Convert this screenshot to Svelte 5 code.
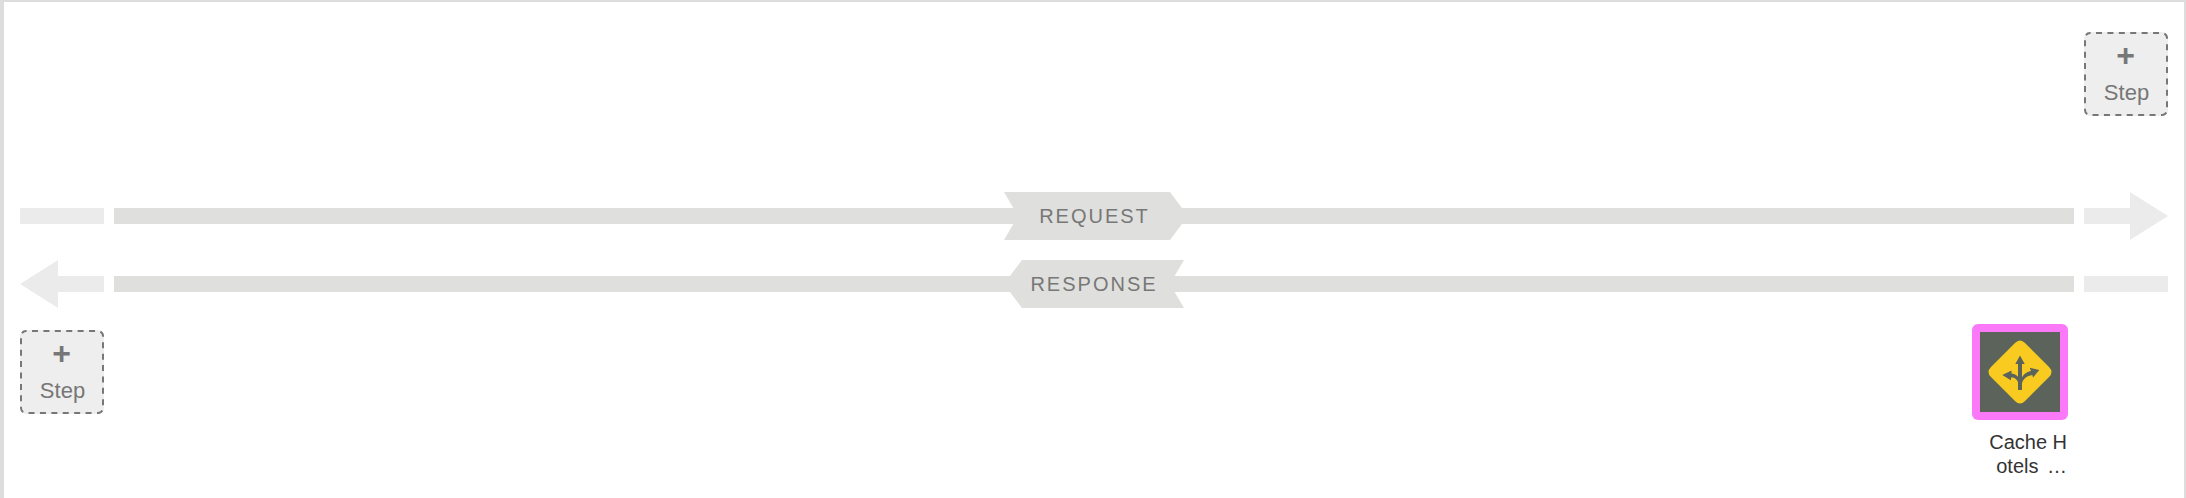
<script>
  const lanes = [
    { name: 'REQUEST', dir: 'right' },
    { name: 'RESPONSE', dir: 'left' }
  ];
</script>

{#snippet addStep()}
  <button class="step">
    <svg class="outline" viewBox="0 0 84 84" aria-hidden="true">
      <rect x="1" y="1" width="82" height="82" rx="5" />
    </svg>
    <span class="plus">+</span><span class="caption">Step</span>
  </button>
{/snippet}

<main class="flow">
  <div class="top">{@render addStep()}</div>

  {#each lanes as lane}
    <div class="lane {lane.dir}">
      <svg class="end" viewBox="0 0 84 48" aria-hidden="true">
        {#if lane.dir === 'left'}
          <path d="M0 24 38 0V16H84V32H38V48Z" />
        {:else}
          <path d="M0 16H84V32H0Z" />
        {/if}
      </svg>
      <div class="track"><span class="label">{lane.name}</span></div>
      <svg class="end" viewBox="0 0 84 48" aria-hidden="true">
        {#if lane.dir === 'right'}
          <path d="M0 16H46V0L84 24 46 48V32H0Z" />
        {:else}
          <path d="M0 16H84V32H0Z" />
        {/if}
      </svg>
    </div>
  {/each}

  <div class="bottom">
    {@render addStep()}
    <div class="policy">
      <div class="icon">
        <svg viewBox="0 0 80 80" aria-hidden="true">
          <path fill="#f9cb21" d="M35 11Q40 6 45 11L69 35Q74 40 69 45L45 69Q40 74 35 69L11 45Q6 40 11 35Z" />
          <g fill="#5b635a">
            <path d="M38 58V32H35.3L40 23.5 44.7 32H42V58Z" />
            <path d="M59.3 38 49.8 35.8 51 39C46 40 43 43 41.5 46.5L42 51.5C43 46.8 47 43.9 52.3 43L53 45.4Z" />
            <path d="M22.3 43 31.5 38.6V41.4C35 41.8 37.5 43.5 39 46L38.3 51C37.5 47.5 35 45.5 31.3 45.2L30.8 48.3Z" />
          </g>
        </svg>
      </div>
      <div class="name"><span>Cache H</span><span class="tail">otels&nbsp; …</span></div>
    </div>
  </div>
</main>

<style>
  :global(body) {
    margin: 0;
    background: #fff;
  }
  .flow {
    box-sizing: border-box;
    height: 498px;
    padding: 30px 16px 0;
    border: solid #ddd;
    border-width: 2px 2px 0 4px;
    overflow: hidden;
    font-family: "Liberation Sans", Arial, sans-serif;
  }
  .top {
    display: flex;
    justify-content: flex-end;
    margin-bottom: 76px;
  }
  .step {
    position: relative;
    box-sizing: border-box;
    display: flex;
    flex-direction: column;
    align-items: center;
    width: 84px;
    height: 84px;
    padding: 2px;
    border: 0;
    border-radius: 6px;
    background: #eee;
    color: #777;
    font: 22px/26px "Liberation Sans", Arial, sans-serif;
  }
  .outline {
    position: absolute;
    inset: 0;
    fill: none;
    stroke: #777;
    stroke-width: 2;
    stroke-dasharray: 6 5.41;
    stroke-dashoffset: -6;
  }
  .plus {
    height: 46px;
    margin-right: 1px;
    font-size: 32px;
    font-weight: bold;
    line-height: 42px;
  }
  .caption {
    padding-left: 1px;
    line-height: 25px;
  }
  .lane {
    display: flex;
    align-items: center;
    gap: 10px;
    height: 48px;
    margin-bottom: 20px;
  }
  .end {
    flex: none;
    width: 84px;
    height: 48px;
    fill: #ebebeb;
  }
  .track {
    flex: 1;
    display: flex;
    justify-content: center;
    align-items: center;
    height: 48px;
    background: linear-gradient(#dfdfdd, #dfdfdd) center / 100% 16px no-repeat;
  }
  .label {
    box-sizing: border-box;
    width: 184px;
    background: #dfdfdd;
    color: #777;
    font-size: 20px;
    line-height: 49px;
    height: 48px;
    letter-spacing: 2px;
    text-align: center;
  }
  .right .label {
    margin-left: 4px;
    padding-right: 3px;
    clip-path: polygon(0 0, 90.2% 0, 100% 50%, 90.2% 100%, 0 100%, 7.6% 50%);
  }
  .left .label {
    width: 180px;
    clip-path: polygon(10% 0, 100% 0, 92.2% 50%, 100% 100%, 10% 100%, 0 50%);
  }
  .bottom {
    display: flex;
    justify-content: space-between;
    align-items: flex-start;
    margin-top: -4px;
    padding-right: 100px;
  }
  .bottom > .step {
    margin-top: 6px;
  }
  .icon {
    box-sizing: border-box;
    width: 96px;
    height: 96px;
    padding: 8px;
    border-radius: 6px;
    background: #fb78f8;
  }
  .icon svg {
    display: block;
    background: #5b635a;
  }
  .name {
    display: flex;
    flex-direction: column;
    align-items: flex-end;
    margin-top: 10px;
    padding-right: 1px;
    color: #333;
    font-size: 20px;
    line-height: 24px;
  }
  .tail {
    word-spacing: -1.3px;
  }
</style>
